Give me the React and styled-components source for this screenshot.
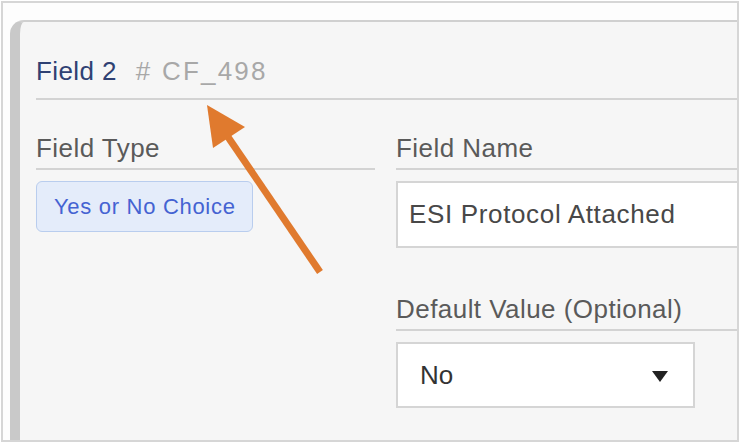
import styled, { createGlobalStyle } from "styled-components";

const GlobalStyle = createGlobalStyle`
	body {
		margin: 0;
		background: #ffffff;
		font-family: "Liberation Sans", Arial, sans-serif;
	}
`;

function App() {
	return (
		<>
			<GlobalStyle />
			<Frame>
				<Card>
					<Header>
						<Title>Field 2</Title>
						<Code># CF_498</Code>
					</Header>
					<Columns>
						<Column>
							<Label>Field Type</Label>
							<Badge>Yes or No Choice</Badge>
						</Column>
						<Column>
							<Label>Field Name</Label>
							<TextBox>ESI Protocol Attached</TextBox>
							<Label $spaced>Default Value (Optional)</Label>
							<Select>
								No
								<Caret />
							</Select>
						</Column>
					</Columns>
				</Card>
				<Pointer viewBox="0 0 740 442" width="740" height="442">
					<line
						x1="320"
						y1="272"
						x2="228"
						y2="137"
						stroke="#e07a2e"
						strokeWidth="7"
					/>
					<polygon points="207,105 213,148 245,127" fill="#e07a2e" />
				</Pointer>
			</Frame>
		</>
	);
}

const Frame = styled.div`
	position: relative;
	margin: 1px 0 0 1px;
	width: 738px;
	height: 441px;
	box-sizing: border-box;
	border: 2px solid #d6d6d6;
	background: #fdfdfd;
	padding: 17px 0 0 7px;
	overflow: hidden;
`;

const Card = styled.div`
	width: 800px;
	height: 100%;
	box-sizing: border-box;
	background: #f6f6f6;
	border-top: 2px solid #d0d0d0;
	border-left: 10px solid #c9c9c9;
	border-top-left-radius: 14px;
	padding: 34px 0 0 16px;
`;

const Header = styled.div`
	display: flex;
	align-items: baseline;
	font-size: 26px;
	line-height: 30px;
	padding-bottom: 12px;
	border-bottom: 2px solid #d3d3d3;
`;

const Title = styled.span`
	color: #2f4173;
	letter-spacing: 0.4px;
`;

const Code = styled.span`
	margin-left: 19px;
	color: #a8a8a8;
	letter-spacing: 2.2px;
`;

const Columns = styled.div`
	display: grid;
	grid-template-columns: 339px 1fr;
	column-gap: 21px;
	margin-top: 33px;
`;

const Column = styled.div`
	display: flex;
	flex-direction: column;
	align-items: flex-start;
`;

const Label = styled.div`
	align-self: stretch;
	font-size: 26px;
	line-height: 30px;
	color: #5a5a5a;
	letter-spacing: 0.45px;
	padding-bottom: 5px;
	border-bottom: 2px solid #d3d3d3;
	margin-top: ${(p) => (p.$spaced ? "46px" : "0")};
`;

const Badge = styled.div`
	display: flex;
	align-items: center;
	margin-top: 11px;
	width: 217px;
	height: 51px;
	box-sizing: border-box;
	padding-left: 17px;
	background: #e4ecfa;
	border: 1px solid #b9cdee;
	border-radius: 6px;
	color: #4463d2;
	font-size: 22px;
	letter-spacing: 0.7px;
`;

const TextBox = styled.div`
	display: flex;
	align-items: center;
	align-self: stretch;
	margin-top: 11px;
	height: 67px;
	box-sizing: border-box;
	padding-left: 11px;
	background: #ffffff;
	border: 2px solid #d5d5d5;
	color: #484848;
	font-size: 26px;
	letter-spacing: 0.65px;
`;

const Select = styled.div`
	display: flex;
	align-items: center;
	justify-content: space-between;
	margin-top: 11px;
	width: 299px;
	height: 66px;
	box-sizing: border-box;
	padding: 0 25px 0 22px;
	background: #ffffff;
	border: 2px solid #d5d5d5;
	color: #333333;
	font-size: 26px;
`;

const Caret = styled.span`
	width: 0;
	height: 0;
	margin-top: 2px;
	border-left: 8px solid transparent;
	border-right: 8px solid transparent;
	border-top: 11px solid #222222;
`;

const Pointer = styled.svg`
	position: absolute;
	top: -3px;
	left: -3px;
	pointer-events: none;
`;

export default App;
